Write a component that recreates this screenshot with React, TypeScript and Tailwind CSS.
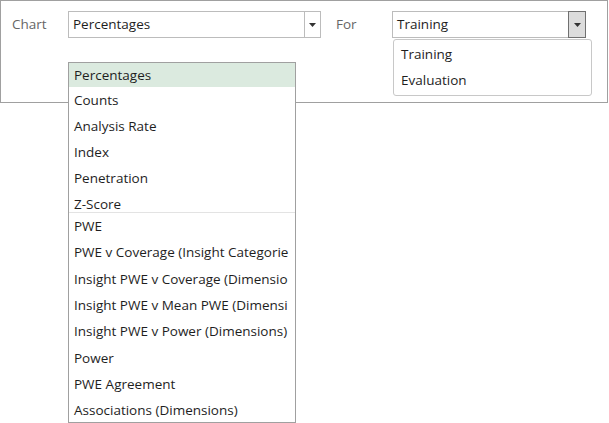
import React from "react";

const font = { fontFamily: '"Open Sans", "Noto Sans", sans-serif' };

const middleOptions = ["Counts", "Analysis Rate", "Index", "Penetration"];
const moreOptions = [
  "PWE",
  "PWE v Coverage (Insight Categorie",
  "Insight PWE v Coverage (Dimensio",
  "Insight PWE v Mean PWE (Dimensi",
  "Insight PWE v Power (Dimensions)",
  "Power",
  "PWE Agreement",
  "Associations (Dimensions)",
];

function Caret() {
  return (
    <svg width="7" height="4" viewBox="0 0 7 4">
      <path d="M0 0h7L3.5 4z" fill="#333" />
    </svg>
  );
}

function Select({ value, width, open }: { value: string; width: string; open?: boolean }) {
  return (
    <div className={`flex h-[27px] ${width} border border-[#bcbcbc] bg-white`}>
      <div className="flex-1 flex items-center pl-[4px] text-[13.5px] text-[#1e1e1e] whitespace-nowrap overflow-hidden">
        {value}
      </div>
      {open ? (
        <div className="w-[18px] -my-px -mr-px flex items-center justify-center border border-[#707070] bg-[#dcdcdc]">
          <Caret />
        </div>
      ) : (
        <div className="w-[16px] flex items-center justify-center border-l border-[#bcbcbc]">
          <Caret />
        </div>
      )}
    </div>
  );
}

function Row({ label, h = "h-[26.3px]" }: { label: string; h?: string }) {
  return (
    <div className={`${h} shrink-0 flex items-center pl-[5px] whitespace-nowrap overflow-hidden text-[13.5px] text-[#1e1e1e]`}>
      {label}
    </div>
  );
}

export default function App() {
  return (
    <div className="relative w-[609px] h-[423px] bg-white" style={font}>
      <div className="w-[608px] h-[103px] border border-[#a0a0a0] flex items-start pt-[10px] pl-[11px]">
        <div className="w-[56px] h-[27px] flex items-center text-[13.5px] text-[#666]">Chart</div>
        <Select value="Percentages" width="w-[253px]" />
        <div className="ml-[15px] w-[56px] h-[27px] flex items-center text-[13.5px] text-[#666]">For</div>
        <Select value="Training" width="w-[194px]" open />
      </div>

      {/* chart type list */}
      <div className="absolute left-[68px] top-[62px] w-[228px] h-[361px] border border-[#a0a0a0] bg-white flex flex-col overflow-hidden">
        <div className="h-[149px] flex flex-col">
          <div className="h-[24px] shrink-0 flex items-center pl-[5px] text-[13.5px] text-[#1e1e1e] bg-[#dbeadf]">
            Percentages
          </div>
          {middleOptions.map((o) => (
            <Row key={o} label={o} h="h-[26px]" />
          ))}
          <div className="h-[21px] shrink-0 flex items-end pl-[5px] leading-[15px] text-[13.5px] text-[#1e1e1e]">
            Z-Score
          </div>
        </div>
        <div className="border-t border-[#e3e3e3] flex flex-col">
          {moreOptions.map((o) => (
            <Row key={o} label={o} />
          ))}
        </div>
      </div>

      {/* dataset list */}
      <div className="absolute left-[393px] top-[39px] w-[199px] h-[57px] border border-[#c8c8c8] rounded-[3px] bg-white flex flex-col pt-[1px]">
        <div className="h-[26px] flex items-center pl-[7px] text-[13.5px] text-[#1e1e1e]">Training</div>
        <div className="h-[26px] flex items-center pl-[7px] text-[13.5px] text-[#1e1e1e]">Evaluation</div>
      </div>
    </div>
  );
}
